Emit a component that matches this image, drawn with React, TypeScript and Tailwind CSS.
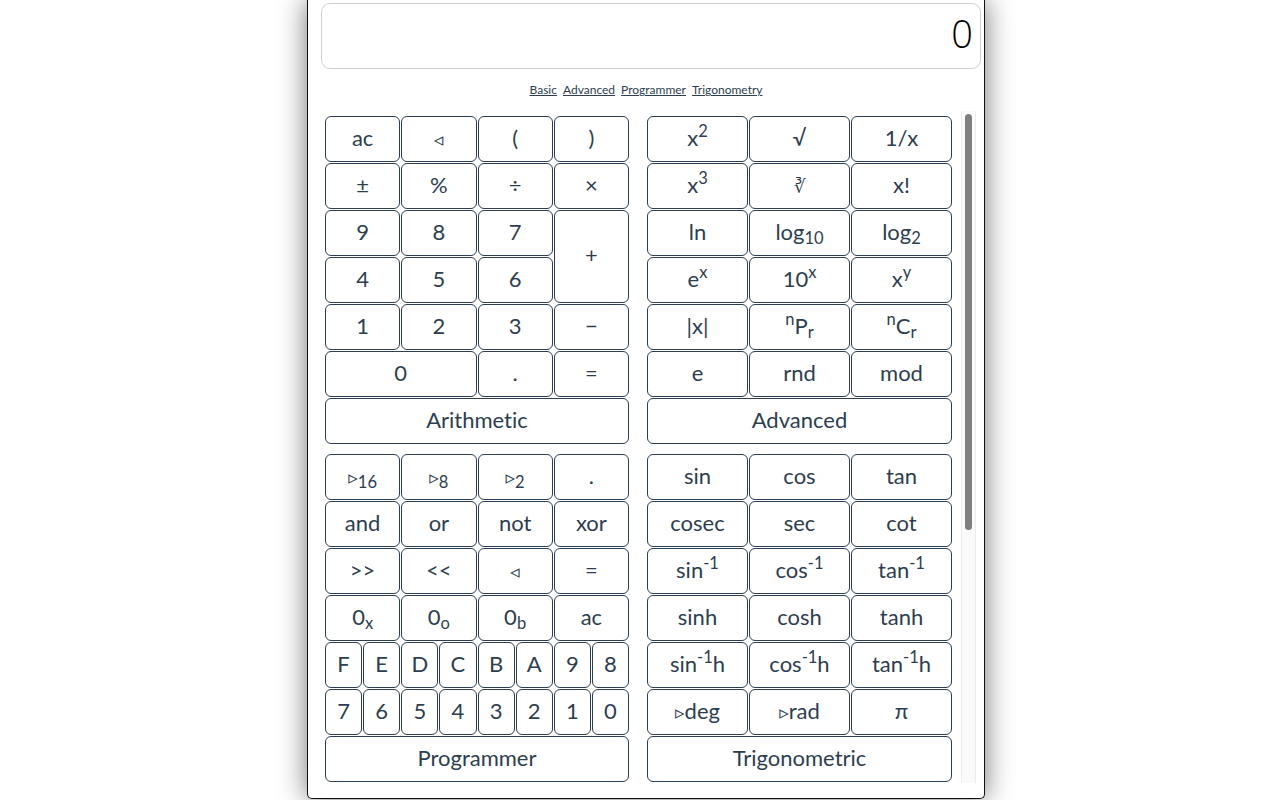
import type { ReactNode } from "react";

type KeyDef = { label: ReactNode; span?: string };

const tri = (dir: "l" | "r") => (
  <span className="font-['DejaVu_Sans',sans-serif] text-[19px]">{dir === "l" ? "◃" : "▹"}</span>
);

const arithmetic: KeyDef[] = [
  { label: "ac" },
  { label: tri("l") },
  { label: "(" },
  { label: ")" },
  { label: "±" },
  { label: "%" },
  { label: "÷" },
  { label: "×" },
  { label: "9" },
  { label: "8" },
  { label: "7" },
  { label: "+", span: "row-span-2" },
  { label: "4" },
  { label: "5" },
  { label: "6" },
  { label: "1" },
  { label: "2" },
  { label: "3" },
  { label: "−" },
  { label: "0", span: "col-span-2" },
  { label: "." },
  { label: "=" },
  { label: "Arithmetic", span: "col-span-4" },
];

const advanced: KeyDef[] = [
  { label: <>x<sup>2</sup></> },
  { label: "√" },
  { label: "1/x" },
  { label: <>x<sup>3</sup></> },
  { label: <span className="font-['DejaVu_Sans',sans-serif] text-[18px] font-light">∛</span> },
  { label: "x!" },
  { label: "ln" },
  { label: <>log<sub>10</sub></> },
  { label: <>log<sub>2</sub></> },
  { label: <>e<sup>x</sup></> },
  { label: <>10<sup>x</sup></> },
  { label: <>x<sup>y</sup></> },
  { label: "|x|" },
  { label: <><sup>n</sup>P<sub>r</sub></> },
  { label: <><sup>n</sup>C<sub>r</sub></> },
  { label: "e" },
  { label: "rnd" },
  { label: "mod" },
  { label: "Advanced", span: "col-span-3" },
];

const programmer: KeyDef[] = [
  { label: <>{tri("r")}<sub>16</sub></>, span: "col-span-2" },
  { label: <>{tri("r")}<sub>8</sub></>, span: "col-span-2" },
  { label: <>{tri("r")}<sub>2</sub></>, span: "col-span-2" },
  { label: ".", span: "col-span-2" },
  { label: "and", span: "col-span-2" },
  { label: "or", span: "col-span-2" },
  { label: "not", span: "col-span-2" },
  { label: "xor", span: "col-span-2" },
  { label: ">>", span: "col-span-2" },
  { label: "<<", span: "col-span-2" },
  { label: tri("l"), span: "col-span-2" },
  { label: "=", span: "col-span-2" },
  { label: <>0<sub>x</sub></>, span: "col-span-2" },
  { label: <>0<sub>o</sub></>, span: "col-span-2" },
  { label: <>0<sub>b</sub></>, span: "col-span-2" },
  { label: "ac", span: "col-span-2" },
  ...["F", "E", "D", "C", "B", "A", "9", "8", "7", "6", "5", "4", "3", "2", "1", "0"].map((d) => ({ label: d })),
  { label: "Programmer", span: "col-span-8" },
];

const trig: KeyDef[] = [
  { label: "sin" },
  { label: "cos" },
  { label: "tan" },
  { label: "cosec" },
  { label: "sec" },
  { label: "cot" },
  { label: <>sin<sup>-1</sup></> },
  { label: <>cos<sup>-1</sup></> },
  { label: <>tan<sup>-1</sup></> },
  { label: "sinh" },
  { label: "cosh" },
  { label: "tanh" },
  { label: <>sin<sup>-1</sup>h</> },
  { label: <>cos<sup>-1</sup>h</> },
  { label: <>tan<sup>-1</sup>h</> },
  { label: <>{tri("r")}deg</> },
  { label: <>{tri("r")}rad</> },
  { label: "π" },
  { label: "Trigonometric", span: "col-span-3" },
];

function Pad({ keys, cols }: { keys: KeyDef[]; cols: string }) {
  return (
    <div className={`grid ${cols} auto-rows-[46px] gap-px`}>
      {keys.map((k, i) => (
        <button
          key={i}
          className={`${k.span ?? ""} flex items-center justify-center rounded-[6px] border border-[#2c3e50] bg-white pb-[3px] text-[22px] leading-none text-[#2c3e50]`}
        >
          <span>{k.label}</span>
        </button>
      ))}
    </div>
  );
}

export default function App() {
  return (
    <div className="min-h-[800px] bg-white font-['Lato',sans-serif] [font-variant-ligatures:none]">
      <div className="ml-[307px] flex h-[799px] w-[678px] flex-col rounded-b-[5px] border-x border-b border-[#111] bg-white shadow-[0_0_28px_rgba(0,0,0,0.55)]">
        {/* Display */}
        <div className="ml-[13px] mt-[3px] flex h-[66px] w-[660px] items-center justify-end rounded-[9px] border border-[#cfcfcf] pb-[5px] pr-[7px] font-['Open_Sans',sans-serif] text-[38px] font-light text-black">
          0
        </div>

        {/* Mode links */}
        <div className="mt-[13px] flex h-[16px] items-center justify-center gap-[6px] text-[12px] text-[#2c3e50]">
          <a className="underline">Basic</a>
          <a className="underline">Advanced</a>
          <a className="underline">Programmer</a>
          <a className="underline">Trigonometry</a>
        </div>

        {/* Keypads + scrollbar */}
        <div className="ml-[13px] mt-[13px] flex h-[672px] w-[655px]">
          <div className="flex-1 overflow-hidden pl-[4px] pt-[5px]">
            <div className="grid grid-cols-[304px_305px] gap-x-[18px] gap-y-[10px]">
              <Pad keys={arithmetic} cols="grid-cols-4" />
              <Pad keys={advanced} cols="grid-cols-3" />
              <Pad keys={programmer} cols="grid-cols-8" />
              <Pad keys={trig} cols="grid-cols-3" />
            </div>
          </div>
          <div className="w-[15px] border-x border-[#ececec] bg-[#fafafa] px-[3px] pt-[3px]">
            <div className="h-[416px] rounded-full bg-[#7f7f7f]" />
          </div>
        </div>
      </div>
    </div>
  );
}
